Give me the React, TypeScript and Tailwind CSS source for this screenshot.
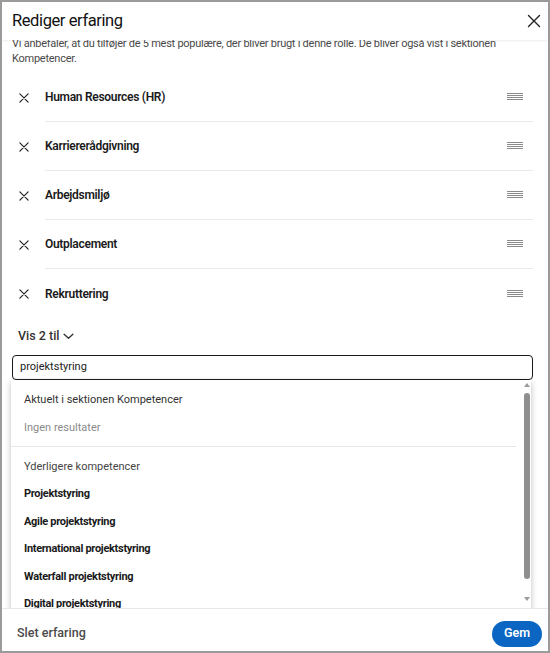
import React from "react";

const skills = [
  "Human Resources (HR)",
  "Karriererådgivning",
  "Arbejdsmiljø",
  "Outplacement",
  "Rekruttering",
];

const results = [
  "Projektstyring",
  "Agile projektstyring",
  "International projektstyring",
  "Waterfall projektstyring",
  "Digital projektstyring",
];

function XIcon({ className, width = "1.6" }: { className?: string; width?: string }) {
  return (
    <svg viewBox="0 0 16 16" className={className} fill="none" stroke="currentColor" strokeWidth={width} strokeLinecap="round">
      <path d="M2.5 2.5 L13.5 13.5 M13.5 2.5 L2.5 13.5" />
    </svg>
  );
}

function Handle() {
  return (
    <svg viewBox="0 0 16 8" className="w-[16px] h-[8px]" fill="none" stroke="#8a8a8a" strokeWidth="1">
      <path d="M0 0.5 H16 M0 2.5 H16 M0 4.5 H16 M0 6.5 H16" />
    </svg>
  );
}

export default function App() {
  return (
    <div className="w-[550px] h-[653px] border-2 border-[#9a9a9a] bg-white flex flex-col overflow-hidden font-['Roboto',_sans-serif] text-[#1f1f1f]">
      {/* header */}
      <div className="h-[38px] shrink-0 flex items-center justify-between pl-[10px] pr-[2px] relative z-10 shadow-[0_1px_2px_rgba(0,0,0,0.08)] bg-white">
        <h1 className="text-[16.5px] leading-none tracking-[-0.4px] text-[#111]">Rediger erfaring</h1>
        <button className="w-[24px] h-[24px] flex items-center justify-center text-[#222]">
          <XIcon className="w-[16px] h-[16px]" width="1.4" />
        </button>
      </div>

      {/* body */}
      <div className="flex-1 overflow-hidden">
        <div className="-mt-[4px] pl-[10px] pr-[15px]">
          <p className="text-[11px] leading-[15px] tracking-[-0.25px] text-[#4a4a4a] pr-[20px]">
            Vi anbefaler, at du tilføjer de 5 mest populære, der bliver brugt i denne rolle. De bliver også vist i sektionen Kompetencer.
          </p>

          <ul className="mt-[7px]">
            {skills.map((s, i) => (
              <li key={s} className="flex h-[49px]">
                <div className="w-[33px] shrink-0 flex items-center pl-[6px] text-[#222]">
                  <XIcon className="w-[12px] h-[12px]" />
                </div>
                <div className={`flex-1 flex items-center justify-between pr-[10px] ${i < skills.length - 1 ? "border-b border-[#ebebeb]" : ""}`}>
                  <span className="text-[12px] tracking-[-0.3px] font-semibold text-[#1a1a1a]">{s}</span>
                  <Handle />
                </div>
              </li>
            ))}
          </ul>

          <button className="mt-[8px] ml-[6px] h-[20px] flex items-center gap-[3px] text-[12.5px] font-medium text-[#333]">
            Vis 2 til
            <svg viewBox="0 0 12 8" className="w-[11px] h-[7px]" fill="none" stroke="#333" strokeWidth="1.6" strokeLinecap="round" strokeLinejoin="round">
              <path d="M1 1.5 L6 6 L11 1.5" />
            </svg>
          </button>

          <div className="mt-[9px] h-[25px] border-[1.5px] border-[#1a1a1a] rounded-[4px] flex items-center px-[7px] text-[11px] text-[#222]">
            projektstyring
          </div>

          <div className="relative -ml-[1px] mr-[2px] rounded-b-[6px] bg-white shadow-[0_2px_6px_rgba(0,0,0,0.25)] h-[240px] overflow-hidden">
            <div className="pl-[13px] pr-[20px] pt-[10px]">
              <div className="h-[20px] flex items-center text-[11px] text-[#333]">Aktuelt i sektionen Kompetencer</div>
              <div className="mt-[8px] h-[20px] flex items-center text-[11px] text-[#8a8a8a]">Ingen resultater</div>
            </div>
            <div className="mt-[8px] mr-[15px] border-t border-[#e6e6e6]" />
            <div className="pl-[13px] pr-[20px] pt-[10px]">
              <div className="h-[20px] flex items-center text-[11px] text-[#444]">Yderligere kompetencer</div>
              {results.map((r) => (
                <div key={r} className="mt-[7.5px] h-[20px] flex items-center text-[11px] tracking-[-0.3px] font-bold text-[#1a1a1a]">
                  {r}
                </div>
              ))}
            </div>

            {/* scrollbar */}
            <div className="absolute top-0 right-0 w-[9px] h-[227px] flex flex-col items-center bg-white">
              <div className="mt-[3px] w-0 h-0 border-l-[3px] border-r-[3px] border-b-[4px] border-l-transparent border-r-transparent border-b-[#9a9a9a]" />
              <div className="mt-[6px] w-[6px] h-[186px] rounded-full bg-[#8f8f8f]" />
              <div className="mt-auto mb-[6px] w-0 h-0 border-l-[3px] border-r-[3px] border-t-[4px] border-l-transparent border-r-transparent border-t-[#9a9a9a]" />
            </div>
          </div>
        </div>
      </div>

      {/* footer */}
      <div className="h-[43px] shrink-0 border-t border-[#e8e8e8] flex items-center justify-between pl-[15px] pr-[6px] pt-[7px]">
        <button className="text-[12.5px] font-medium text-[#4a4a4a]">Slet erfaring</button>
        <button className="w-[50px] h-[26px] rounded-full bg-[#0a66c2] text-white text-[12.5px] font-semibold flex items-center justify-center">
          Gem
        </button>
      </div>
    </div>
  );
}
